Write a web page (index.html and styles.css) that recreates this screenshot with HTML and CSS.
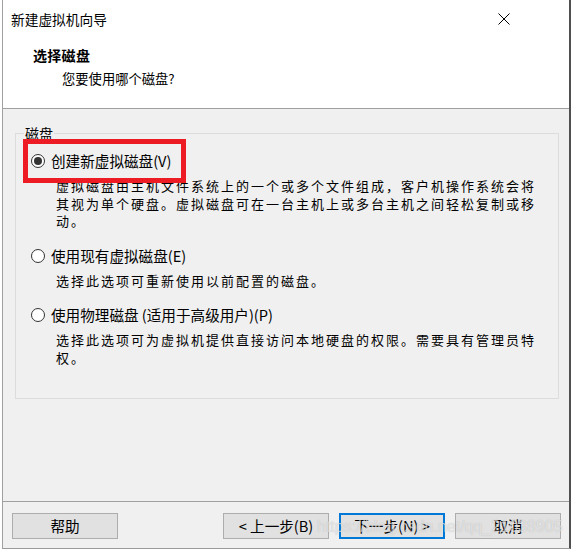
FILE: index.html
```html
<!DOCTYPE html>
<html lang="zh-CN">
<head>
<meta charset="utf-8">
<title>新建虚拟机向导</title>
<link rel="stylesheet" href="styles.css">
</head>
<body>
<div class="window">
  <header class="header">
    <div class="titlebar">
      <span class="title">新建虚拟机向导</span>
      <svg class="close" width="12" height="12" viewBox="0 0 12 12" aria-label="关闭"><path d="M0.5 0.5L11.5 11.5M11.5 0.5L0.5 11.5" stroke="#000" stroke-width="1" fill="none"/></svg>
    </div>
    <div class="heading">选择磁盘</div>
    <div class="subtitle">您要使用哪个磁盘?</div>
  </header>
  <main class="content">
    <fieldset class="group">
      <legend class="legend">磁盘</legend>
      <div class="option"><span class="radio checked"></span><span class="label">创建新虚拟磁盘(V)</span></div>
      <p class="desc">虚拟磁盘由主机文件系统上的一个或多个文件组成，客户机操作系统会将<br>其视为单个硬盘。虚拟磁盘可在一台主机上或多台主机之间轻松复制或移<br>动。</p>
      <div class="option gap"><span class="radio"></span><span class="label">使用现有虚拟磁盘(E)</span></div>
      <p class="desc">选择此选项可重新使用以前配置的磁盘。</p>
      <div class="option gap"><span class="radio"></span><span class="label">使用物理磁盘 (适用于高级用户)(P)</span></div>
      <p class="desc">选择此选项可为虚拟机提供直接访问本地硬盘的权限。需要具有管理员特<br>权。</p>
    </fieldset>
  </main>
  <footer class="footer">
    <button class="btn">帮助</button>
    <div class="nav">
      <button class="btn">&lt; 上一步(B)</button>
      <button class="btn primary">下一步(N) &gt;</button>
      <button class="btn">取消</button>
    </div>
  </footer>
  <div class="annotation"></div>
  <div class="watermark">https://blog.csdn.net/qq_21038905</div>
</div>
</body>
</html>
```

FILE: styles.css
```css
* { box-sizing: border-box; }
html, body { margin: 0; padding: 0; background: #fff; }
body {
  font-family: "Noto Sans CJK SC", "Microsoft YaHei", sans-serif;
  color: #000;
}
.window {
  position: relative;
  margin-left: 2px;
  width: 569px;
  height: 549px;
  border-left: 1px solid #a0a0a0;
  border-right: 2px solid #505050;
  border-bottom: 1px solid #9a9a9a;
  background: #f0f0f0;
  display: flex;
  flex-direction: column;
}
.header {
  height: 109px;
  background: #fff;
  border-bottom: 1px solid #a0a0a0;
  flex: none;
}
.titlebar {
  display: flex;
  height: 39px;
  padding-left: 8px;
  padding-top: 9px;
}
.title {
  font-size: 13.7px;
  line-height: 21px;
}
.close {
  margin-left: auto;
  margin-right: 59px;
  margin-top: 4px;
}
.heading {
  margin-top: 7px;
  padding-left: 30px;
  font-size: 14px;
  font-weight: bold;
  letter-spacing: 0.3px;
  line-height: 19px;
}
.subtitle {
  margin-top: 5px;
  padding-left: 59px;
  font-size: 13.3px;
  line-height: 18px;
}
.content {
  flex: 1;
  padding: 17px 0 0 12px;
}
.group {
  margin: 0;
  width: 544px;
  height: 273px;
  border: 1px solid #dcdcdc;
  padding: 12px 0 0 15px;
}
.legend {
  font-size: 14px;
  line-height: 14px;
  padding: 0 1px;
  margin-left: -7px;
}
.option {
  display: flex;
  align-items: center;
  height: 18px;
  font-size: 14.6px;
  line-height: 18px;
}
.option.gap { margin-top: 17px; }
.radio {
  width: 14px;
  height: 14px;
  border-radius: 50%;
  border: 1px solid #333;
  background: #fff;
  margin-right: 6px;
  display: flex;
  align-items: center;
  justify-content: center;
  flex: none;
}
.radio.checked::after {
  content: "";
  width: 8px;
  height: 8px;
  border-radius: 50%;
  background: #333;
}
.desc {
  margin: 7px 0 0 25px;
  font-size: 13px;
  letter-spacing: 2px;
  line-height: 17.6px;
}
.footer {
  flex: none;
  height: 47px;
  border-top: 1px solid #a0a0a0;
  display: flex;
  align-items: flex-start;
  padding: 11px 8px 0 9px;
}
.nav {
  margin-left: auto;
  display: flex;
  gap: 10px;
}
.btn {
  width: 106px;
  height: 26px;
  background: #e1e1e1;
  border: 1px solid #adadad;
  font-family: "Noto Sans CJK SC", sans-serif;
  font-size: 14.6px;
  line-height: 20px;
  color: #000;
  padding: 0;
  margin: 0;
}
.btn.primary { border: 2px solid #0078d7; }
.annotation {
  position: absolute;
  left: 20px;
  top: 139px;
  width: 163px;
  height: 44px;
  border: 5px solid #ed1c24;
}
.watermark {
  position: absolute;
  left: 314px;
  top: 516px;
  font-family: "Liberation Sans", Arial, sans-serif;
  font-size: 16px;
  line-height: 22px;
  color: rgba(255, 255, 255, 0.55);
  text-shadow: 0 0 1px rgba(120, 120, 120, 0.45);
  pointer-events: none;
}
```
